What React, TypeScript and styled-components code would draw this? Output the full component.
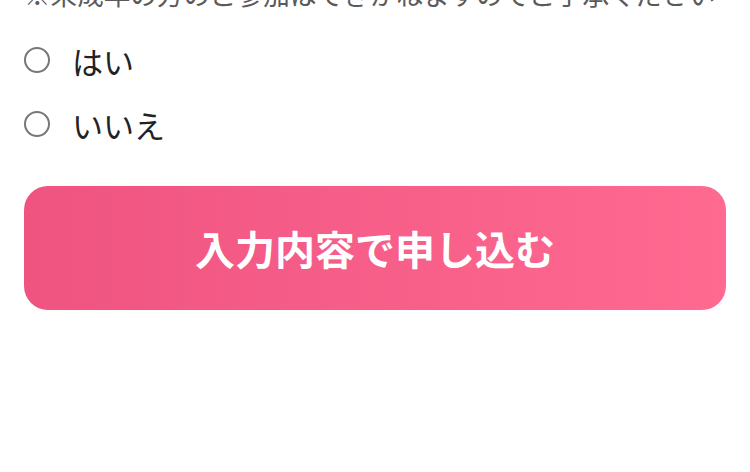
import { useState } from 'react'
import styled, { createGlobalStyle } from 'styled-components'

const GlobalStyle = createGlobalStyle`
  html, body {
    margin: 0;
    padding: 0;
    background: #ffffff;
    font-family: 'Noto Sans CJK JP', 'Noto Sans', sans-serif;
  }
`

const Page = styled.div`
  width: 750px;
  height: 472px;
  overflow: hidden;
  box-sizing: border-box;
  padding: 0 24px;
`

const Note = styled.p`
  margin: -26px 0 0;
  font-size: 26.6px;
  line-height: 40px;
  color: #5a5a5a;
  white-space: nowrap;
  letter-spacing: 0;
`

const Options = styled.div`
  display: flex;
  flex-direction: column;
  margin-top: 14px;
`

const OptionRow = styled.label`
  display: flex;
  align-items: center;
  height: 64px;
  cursor: pointer;
`

const Circle = styled.span<{ checked?: boolean }>`
  box-sizing: border-box;
  width: 26px;
  height: 26px;
  border-radius: 50%;
  border: 2px solid #777777;
  margin-right: 22px;
  flex: none;
  display: flex;
  align-items: center;
  justify-content: center;

  &::after {
    content: '';
    width: 12px;
    height: 12px;
    border-radius: 50%;
    background: #f05a84;
    display: ${({ checked }) => (checked ? 'block' : 'none')};
  }
`

const OptionLabel = styled.span`
  font-size: 31px;
  color: #222222;
  line-height: 1;
`

const SubmitButton = styled.button`
  display: flex;
  align-items: center;
  justify-content: center;
  width: 100%;
  height: 124px;
  margin-top: 30px;
  border: none;
  border-radius: 24px;
  background: linear-gradient(90deg, #ef5480 0%, #f65d88 45%, #ff6a91 100%);
  color: #ffffff;
  font-family: 'Noto Sans CJK JP', 'Noto Sans', sans-serif;
  font-size: 40px;
  font-weight: 700;
  letter-spacing: 0;
  cursor: pointer;
`

const options = ['はい', 'いいえ']

export default function App() {
  const [selected, setSelected] = useState<string | null>(null)
  return (
    <Page>
      <GlobalStyle />
      <Note>※未成年の方のご参加はできかねますのでご了承ください</Note>
      <Options>
        {options.map((opt) => (
          <OptionRow key={opt} onClick={() => setSelected(opt)}>
            <Circle checked={selected === opt} />
            <OptionLabel>{opt}</OptionLabel>
          </OptionRow>
        ))}
      </Options>
      <SubmitButton type="button">入力内容で申し込む</SubmitButton>
    </Page>
  )
}
